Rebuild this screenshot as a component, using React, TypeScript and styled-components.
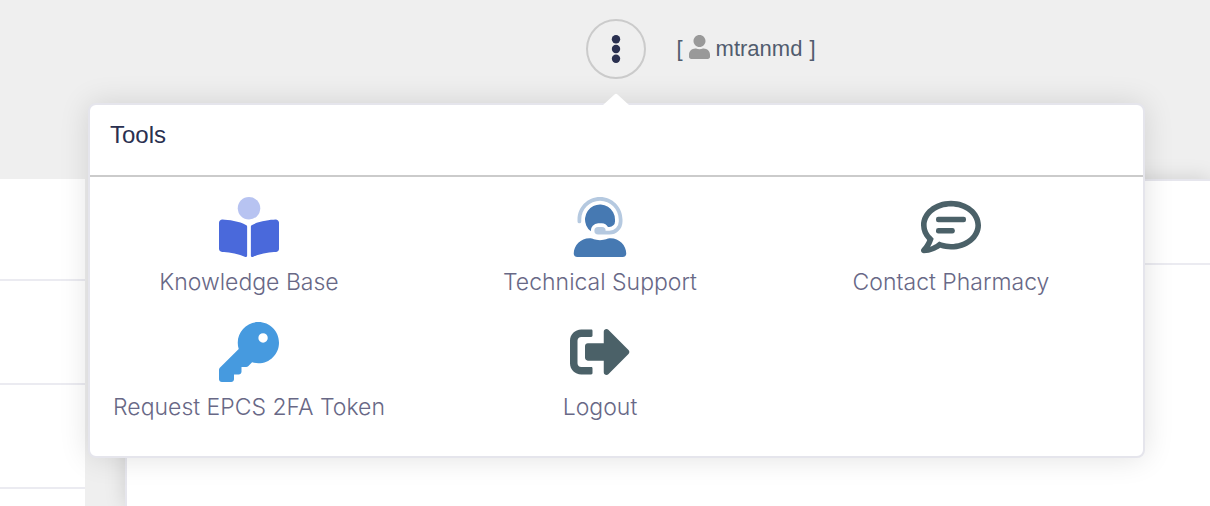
import React from "react";
import styled, { createGlobalStyle } from "styled-components";

const GlobalStyle = createGlobalStyle`
  * { box-sizing: border-box; }
  body {
    margin: 0;
    background: #efefef;
    font-family: "Liberation Sans", Arial, sans-serif;
    color: #2a3050;
  }
`;

const Page = styled.div`
  position: relative;
  display: flex;
  flex-direction: column;
  min-height: 100vh;
`;

const TopBar = styled.header`
  display: flex;
  justify-content: center;
  align-items: flex-start;
  gap: 30px;
  height: 179px;
  padding: 19px 0 0 192px;
`;

const MenuAnchor = styled.div`
  display: flex;
  position: relative;
`;

const MenuButton = styled.button`
  display: flex;
  align-items: center;
  justify-content: center;
  width: 60px;
  height: 60px;
  padding: 0;
  border: 2px solid #cbcbcb;
  border-radius: 50%;
  background: transparent;
  color: #2a3050;
  cursor: pointer;
`;

const MenuArrow = styled.svg`
  position: absolute;
  z-index: 3;
  top: 74px;
  left: 17px;
`;

const UserInfo = styled.div`
  display: flex;
  align-items: center;
  gap: 6px;
  height: 60px;
  font-size: 22px;
  line-height: 28px;
  color: #515c6e;

  svg {
    margin-bottom: 4px;
  }
`;

const UserName = styled.span`
  display: flex;
  gap: 7px;
`;

const Content = styled.main`
  display: flex;
  flex: 1;
`;

const SideList = styled.ul`
  flex: 0 0 85px;
  margin: 0 40px 0 0;
  padding: 0;
  list-style: none;
  background: #fff;
`;

const SideItem = styled.li`
  height: 104px;
  border-bottom: 2px solid #ebebf1;

  &:first-child {
    height: 102px;
  }
`;

const Panel = styled.section`
  flex: 1;
  border: solid #e6e6ed;
  border-width: 2px 0 0 2px;
  background: #fff;
  box-shadow: 0 0 20px rgba(0, 0, 0, 0.14);
  clip-path: inset(-30px 0 0 -30px);
`;

const PanelHeader = styled.div`
  height: 84px;
  border-bottom: 2px solid #ebebf1;
`;

const ToolsMenu = styled.section`
  position: absolute;
  z-index: 2;
  top: 103px;
  left: 88px;
  right: 65px;
  border: 2px solid #e5e5ec;
  border-radius: 8px;
  background: #fff;
  box-shadow: 0 0 30px rgba(0, 0, 0, 0.12);
`;

const ToolsTitle = styled.h2`
  height: 72px;
  margin: 0;
  padding: 14px 20px;
  border-bottom: 2px solid #cbcbcb;
  font-size: 24px;
  font-weight: 400;
  line-height: 32px;
`;

const ToolsGrid = styled.nav`
  display: grid;
  grid-template-columns: repeat(3, 1fr);
  padding-bottom: 29px;
`;

const Tool = styled.a`
  display: flex;
  flex-direction: column;
  align-items: center;
  gap: 9px;
  height: 125px;
  margin-right: 33px;
  padding-top: 20px;
  color: #686886;
  font-family: Inter, "Liberation Sans", sans-serif;
  font-size: 23px;
  font-weight: 300;
  line-height: 32px;
  white-space: nowrap;
  text-decoration: none;
`;

const BookIcon = () => (
  <svg width="60" height="60" viewBox="0 0 512 512" fill="#4a69db" aria-hidden="true">
    <circle cx="256" cy="96" r="96" fill="#b7c3f1" />
    <path d="M233.59 241.1c-59.33-36.32-155.43-46.3-203.79-49.05C13.55 191.13 0 203.51 0 219.14v222.8c0 14.33 11.59 26.28 26.49 27.05 43.66 2.29 131.99 10.68 193.04 41.43 9.37 4.72 20.48-1.71 20.48-11.87V252.56c-.01-4.67-2.32-8.95-6.42-11.46zm248.61-49.05c-48.35 2.74-144.46 12.73-203.78 49.05-4.1 2.51-6.41 6.96-6.41 11.63v245.79c0 10.19 11.14 16.63 20.54 11.9 61.04-30.72 149.32-39.11 192.97-41.4 14.9-.78 26.49-12.73 26.49-27.06V219.14c-.01-15.63-13.56-28.01-29.81-27.09z" />
  </svg>
);

const HeadsetIcon = () => (
  <svg width="60" height="60" viewBox="-32 0 512 512" fill="#4679b2" aria-hidden="true">
    <path
      fill="#b5c9e0"
      d="M48 224a16 16 0 0 0 16-16v-16c0-88.2 71.8-160 160-160s160 71.8 160 160v16a80 80 0 0 1-80 80h-32a32 32 0 0 0-32-32h-32a32 32 0 0 0 0 64h96a112 112 0 0 0 112-112v-16C416 86 330 0 224 0S32 86 32 192v16a16 16 0 0 0 16 16z"
    />
    <path d="M146 293A128 128 0 1 1 352 192v16a48 48 0 0 1-48 48h-12a64 64 0 0 0-52-32h-32a64 64 0 0 0-62 69z" />
    <path d="M314 352c-29 0-43 16-90 16s-61-16-90-16C60 352 0 412 0 482c0 18 12 30 30 30h388c18 0 30-12 30-30 0-70-60-130-134-130z" />
  </svg>
);

const ChatIcon = () => (
  <svg width="60" height="60" viewBox="0 0 512 512" fill="#4b6168" aria-hidden="true">
    <path d="M256 32C114.6 32 0 125.1 0 240c0 47.6 19.9 91.2 52.9 126.3C38 405.7 7 439.1 6.5 439.5c-6.6 7-8.4 17.2-4.6 26S14.4 480 24 480c61.5 0 110-25.7 139.1-46.3C192 442.8 223.2 448 256 448c141.4 0 256-93.1 256-208S397.4 32 256 32zm0 368c-26.7 0-53.1-4.1-78.4-12.1l-22.7-7.2-19.5 13.8c-14.3 10.1-33.9 21.4-57.5 29 7.3-12.1 14.4-25.7 19.9-40.2l10.6-28.1-20.6-21.8C69.7 314.1 48 282.2 48 240c0-88.2 93.3-160 208-160s208 71.8 208 160-93.3 160-208 160z" />
    <rect x="128" y="168" width="256" height="48" rx="20" />
    <rect x="128" y="264" width="160" height="48" rx="20" />
  </svg>
);

const KeyIcon = () => (
  <svg width="60" height="60" viewBox="0 0 512 512" fill="#469adf" aria-hidden="true">
    <path
      fillRule="evenodd"
      d="M336 352c97.2 0 176-78.8 176-176S433.2 0 336 0S160 78.8 160 176c0 18.7 2.9 36.8 8.3 53.7L7 391c-4.5 4.5-7 10.6-7 17v80c0 13.3 10.7 24 24 24h80c13.3 0 24-10.7 24-24V448h40c13.3 0 24-10.7 24-24V384h40c6.4 0 12.5-2.5 17-7l33.3-33.3c16.9 5.4 35 8.3 53.7 8.3zM376 96a40 40 0 1 1 0 80 40 40 0 1 1 0-80z"
    />
  </svg>
);

const LogoutIcon = () => (
  <svg width="60" height="60" viewBox="0 0 512 512" fill="#4b6168" aria-hidden="true">
    <path d="M180 64H96C43 64 0 107 0 160v192c0 53 43 96 96 96h84c8 0 12-4 12-12v-40c0-8-4-12-12-12H96c-18 0-32-14-32-32V160c0-18 14-32 32-32h84c8 0 12-4 12-12V76c0-8-4-12-12-12z" />
    <path d="M288 84c0-21 25-31 39-17l172 172c10 10 10 24 0 34L327 445c-14 14-39 4-39-17v-98H152c-13 0-24-11-24-24V206c0-13 11-24 24-24h136z" />
  </svg>
);

const UserIcon = () => (
  <svg width="21" height="24" viewBox="0 0 448 512" fill="#999" aria-hidden="true">
    <path d="M224 256c70.7 0 128-57.3 128-128S294.7 0 224 0 96 57.3 96 128s57.3 128 128 128zm89.6 32h-16.7c-22.2 10.2-46.9 16-72.9 16s-50.6-5.8-72.9-16h-16.7C60.2 288 0 348.2 0 422.4V464c0 26.5 21.5 48 48 48h352c26.5 0 48-21.5 48-48v-41.6c0-74.2-60.2-134.4-134.4-134.4z" />
  </svg>
);

const DotsIcon = () => (
  <svg width="10" height="28" viewBox="0 0 10 28" fill="currentColor" aria-hidden="true">
    <circle cx="5" cy="4.3" r="4.2" />
    <circle cx="5" cy="14" r="4.2" />
    <circle cx="5" cy="23.7" r="4.2" />
  </svg>
);

const tools = [
  { label: "Knowledge Base", Icon: BookIcon },
  { label: "Technical Support", Icon: HeadsetIcon },
  { label: "Contact Pharmacy", Icon: ChatIcon },
  { label: "Request EPCS 2FA Token", Icon: KeyIcon },
  { label: "Logout", Icon: LogoutIcon },
];

export default function App() {
  return (
    <>
      <GlobalStyle />
      <Page>
        <TopBar>
          <MenuAnchor>
            <MenuButton type="button" aria-label="Tools" aria-expanded="true">
              <DotsIcon />
            </MenuButton>
            <MenuArrow width="26" height="13" viewBox="0 0 26 13" aria-hidden="true">
              <path d="M0 12L11.5 1.5q1.5-1.500 3 0L26 12v1H0z" fill="#fff" />
            </MenuArrow>
          </MenuAnchor>
          <UserInfo>
            <span>[</span>
            <UserIcon />
            <UserName>
              <span>mtranmd</span>
              <span>]</span>
            </UserName>
          </UserInfo>
        </TopBar>
        <Content>
          <SideList>
            <SideItem />
            <SideItem />
            <SideItem />
          </SideList>
          <Panel>
            <PanelHeader />
          </Panel>
        </Content>
        <ToolsMenu>
          <ToolsTitle>Tools</ToolsTitle>
          <ToolsGrid>
            {tools.map(({ label, Icon }) => (
              <Tool key={label} href="#">
                <Icon />
                {label}
              </Tool>
            ))}
          </ToolsGrid>
        </ToolsMenu>
      </Page>
    </>
  );
}
